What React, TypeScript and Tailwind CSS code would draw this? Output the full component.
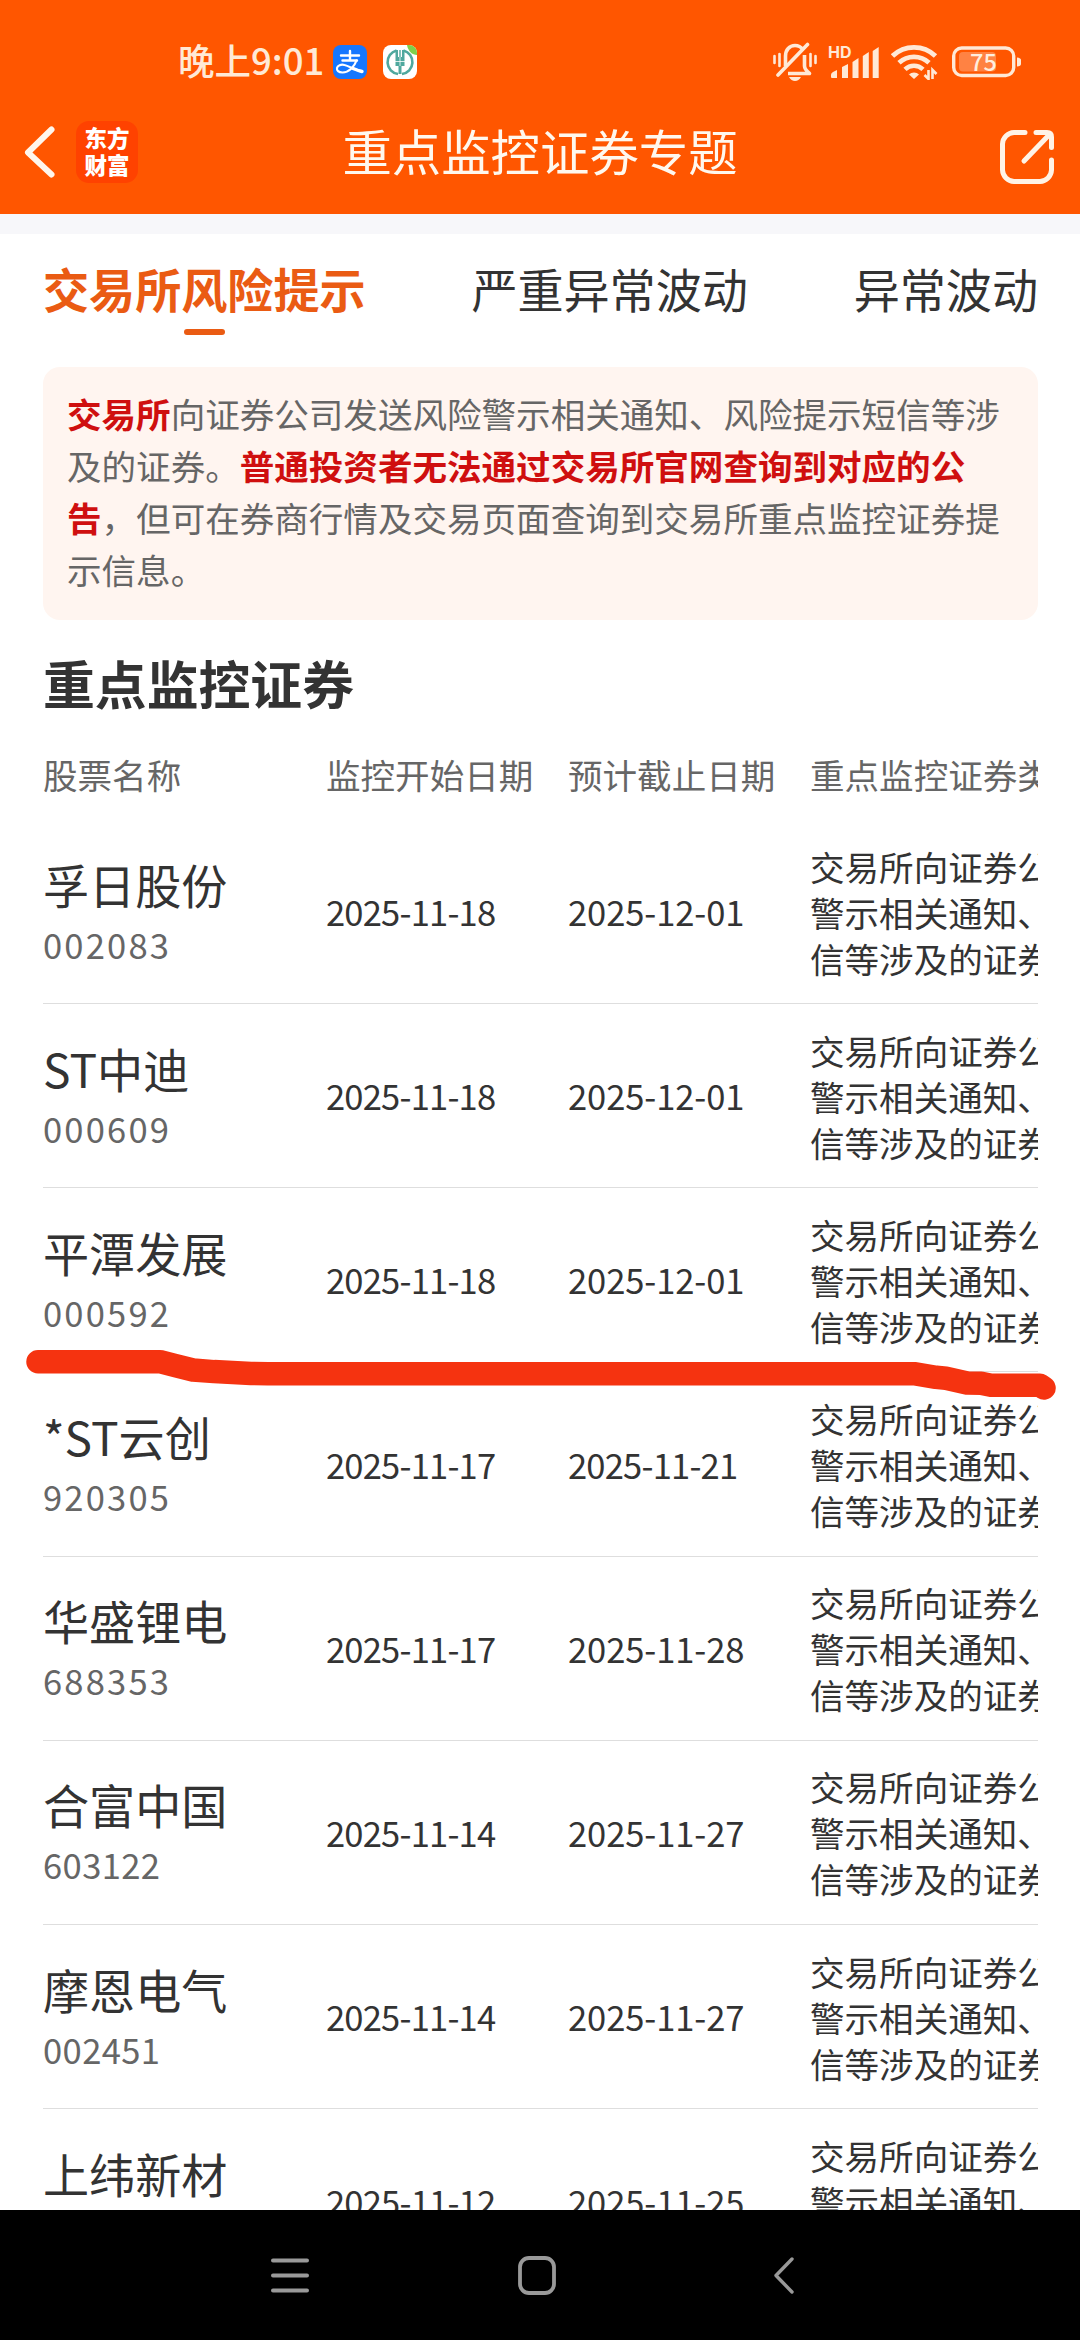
import React from 'react';
import clsx from 'clsx';

interface Stock {
  name: string;
  code: string;
  start: string;
  end: string;
}

const STOCKS: Stock[] = [
  { name: '孚日股份', code: '002083', start: '2025-11-18', end: '2025-12-01' },
  { name: 'ST中迪', code: '000609', start: '2025-11-18', end: '2025-12-01' },
  { name: '平潭发展', code: '000592', start: '2025-11-18', end: '2025-12-01' },
  { name: '*ST云创', code: '920305', start: '2025-11-17', end: '2025-11-21' },
  { name: '华盛锂电', code: '688353', start: '2025-11-17', end: '2025-11-28' },
  { name: '合富中国', code: '603122', start: '2025-11-14', end: '2025-11-27' },
  { name: '摩恩电气', code: '002451', start: '2025-11-14', end: '2025-11-27' },
  { name: '上纬新材', code: '688585', start: '2025-11-12', end: '2025-11-25' },
];

const COLUMNS = ['股票名称', '监控开始日期', '预计截止日期', '重点监控证券类型'];

const GRID = 'grid grid-cols-[283px_242px_242px_480px] w-[1247px]';

// Number of "1" digits, they are set tighter than the others
const countOnes = (value: string): number => value.split('1').length - 1;

function AlipayIcon(): React.JSX.Element {
  return (
    <svg width="34" height="34" viewBox="0 0 34 34" fill="none">
      <rect width="34" height="34" rx="8" fill="#1677ff" />
      <g stroke="#fff" strokeWidth="2.4" strokeLinecap="round">
        <path d="M8 10.500h18M17 6v9M9.500 15.500H24" />
        <path d="M23.500 15.500c-2 6-7.500 12-14 12-4 0-6-2-5.500-4.500.5-2.500 4-4 7.500-3 5 1.300 10 4.700 17.500 6.200" strokeWidth="2.200" />
        <path d="M20 23.500c3 1.200 6 2.400 9 3" strokeWidth="3.400" />
      </g>
    </svg>
  );
}

function BankIcon(): React.JSX.Element {
  return (
    <svg width="34" height="34" viewBox="0 0 34 34" fill="none">
      <rect width="34" height="34" rx="8" fill="#fff" />
      <path d="M24 0h2a8 8 0 0 1 8 8v2c-5 0-9-4-10-10z" fill="#7ed04b" />
      <g stroke="#4fa89e" fill="none">
        <path d="M13.500 5.500a12 12 0 0 0 1.500 23.500M20.500 5.500A12 12 0 0 1 19 29" strokeWidth="2.600" />
        <path d="M17 20v9" strokeWidth="3" />
      </g>
      <path d="M12.500 12V5h2.500v7h1.300V5h1.400v7H19V5h2.500v16h-9z" fill="#4fa89e" />
      <path d="M12 16.500h10M17 12v9" stroke="#fff" strokeWidth=".8" />
    </svg>
  );
}

function MutedBellIcon(): React.JSX.Element {
  return (
    <svg width="44" height="40" viewBox="0 0 44 40" fill="none" stroke="#ffe9d6">
      <path d="M1.500 14v7M6.500 12v12M37.500 12v12M42.500 14v7" strokeWidth="2.600" strokeLinecap="round" />
      <path d="M12.500 24V14c0-6 4-10.500 9.500-10.500 3.500 0 6 1.500 7.800 4" strokeWidth="3.600" />
      <path d="M31.500 13v11c0 3 2 5 5 7.500H15" strokeWidth="3.600" strokeLinejoin="round" />
      <path d="M5 33 34.500 2.500" strokeWidth="3.600" strokeLinecap="round" />
      <path d="M16 35h12c-1.500 2.500-3.500 4-6 4s-4.500-1.500-6-4z" fill="#ffe9d6" stroke="none" />
    </svg>
  );
}

function SignalIcon(): React.JSX.Element {
  return (
    <svg className="overflow-visible" width="50" height="34" viewBox="0 0 50 34" fill="#ffe9d6">
      <path d="M2 30q0-2 2-3l4-2v8H3q-1 0-1-1zM13 22l6-3v14h-6zM23.500 17l6-4v20h-6zM33.800 11l6-4v26h-6zM43.700 6l6-4v31h-6z" />
      <text x="-1" y="12.500" fontSize="16" fontWeight="700" fontFamily="Inter, sans-serif">
        HD
      </text>
    </svg>
  );
}

function WifiIcon(): React.JSX.Element {
  return (
    <svg width="47" height="36" viewBox="0 0 47 36" fill="none" stroke="#ffe9d6">
      <path d="M1.500 12a31 31 0 0 1 43 0" strokeWidth="4.800" />
      <path d="M8 18.700a22 22 0 0 1 30 0" strokeWidth="4.800" />
      <path d="M14 25.300a13 13 0 0 1 18 0" strokeWidth="4.600" />
      <path d="M18 30.500a7 7 0 0 1 10 0l-5 4.500z" fill="#ffe9d6" stroke="none" />
      <path d="M37.500 26v9l-4-4M41.500 35v-9l4 4" strokeWidth="2.600" />
    </svg>
  );
}

function BatteryIcon(): React.JSX.Element {
  return (
    <svg className="overflow-visible" width="70" height="32" viewBox="0 0 70 32" fill="none">
      <rect x="1.700" y="2" width="60" height="27.500" rx="8" stroke="#ffe9d6" strokeWidth="3.400" />
      <rect x="7" y="6" width="37" height="19.500" rx="4" fill="#ff8243" />
      <path d="M65 11.500q4 .5 4 2.500v4q0 2-4 2.500z" fill="#ffe9d6" />
      <text x="31.500" y="24.500" textAnchor="middle" fontSize="23.500" fontWeight="500" fill="#ffeede" fontFamily="'Noto Sans CJK SC', sans-serif">
        75
      </text>
    </svg>
  );
}

function ShareIcon(): React.JSX.Element {
  return (
    <svg width="56" height="56" viewBox="0 0 56 56" fill="none" stroke="#fff3e6" strokeWidth="5" strokeLinecap="round" strokeLinejoin="round">
      <path d="M26 3.500H15A12 12 0 0 0 3.500 15v26A12 12 0 0 0 15 52.500h26A12 12 0 0 0 52.500 41V31" />
      <path d="M37 3.500h11q4.500 0 4.500 4.500v10.500M49 7 25 32" />
    </svg>
  );
}

function StatusBar(): React.JSX.Element {
  return (
    <div className="h-[121px] pt-[3px] flex items-center justify-between pl-[178px] pr-[58px]">
      <div className="flex items-center">
        <span className="-mt-1 text-[36.500px] leading-none w-[155px] font-medium text-[#ffe9d6]">晚上9:01</span>
        <AlipayIcon />
        <span className="w-4" />
        <BankIcon />
      </div>
      <div className="flex items-center">
        <MutedBellIcon />
        <span className="ml-3 mr-3">
          <SignalIcon />
        </span>
        <WifiIcon />
        <span className="ml-3.5">
          <BatteryIcon />
        </span>
      </div>
    </div>
  );
}

function TitleBar(): React.JSX.Element {
  return (
    <div className="h-[62px] grid grid-cols-[1fr_auto_1fr] items-center pl-[23px] pr-[25px]">
      <div className="flex items-center">
        <svg width="33" height="54" viewBox="0 0 33 54" fill="none" stroke="#fff6ec" strokeWidth="6" strokeLinecap="round" strokeLinejoin="round">
          <path d="M28.500 4.500 5 27.500l23.500 22" />
        </svg>
        <div className="ml-5 w-[62px] h-[62px] pb-0.5 rounded-[13px] bg-[#ff4200] text-white text-[22.500px] leading-[27.500px] font-black flex flex-col items-center justify-center">
          <span>东方</span>
          <span>财富</span>
        </div>
      </div>
      <h1 className="-mt-1 ml-0.5 text-[49.400px] leading-none text-[#fff8ee]">重点监控证券专题</h1>
      <div className="mt-2 -mb-0.5 flex justify-end">
        <ShareIcon />
      </div>
    </div>
  );
}

function StockRow({ stock }: { stock: Stock }): React.JSX.Element {
  const dateTracking = (date: string): string =>
    countOnes(date) > 2 ? 'tracking-[-0.800px]' : 'tracking-[-0.100px]';

  return (
    <div className={clsx(GRID, 'h-[184.170px] items-center')}>
      <div className="flex flex-col">
        <span className="-mt-px mb-px text-[46.080px] leading-[64px]">{stock.name}</span>
        <span
          className={clsx(
            'text-[34.560px] leading-[54px] text-[#666]',
            countOnes(stock.code) > 0 ? 'tracking-[0.400px]' : 'tracking-[2.200px]',
          )}
        >
          {stock.code}
        </span>
      </div>
      <span className={clsx('pt-px text-[34.560px]', dateTracking(stock.start))}>{stock.start}</span>
      <span className={clsx('pt-px text-[34.560px]', dateTracking(stock.end))}>{stock.end}</span>
      <p className="text-[34.560px] leading-[46px]">
        交易所向证券公司发送风险
        <br />
        警示相关通知、风险提示短
        <br />
        信等涉及的证券
      </p>
    </div>
  );
}

export default function App(): React.JSX.Element {
  return (
    <div className="relative w-[1080px] h-[2340px] overflow-hidden flex flex-col bg-white text-[#333] font-['Noto_Sans_CJK_SC',sans-serif]">
      <header className="h-[214px] shrink-0 bg-[#ff5600]">
        <StatusBar />
        <TitleBar />
      </header>
      <div className="h-5 shrink-0 bg-[#f7f7fa]" />

      <main className="flex-1 min-h-0 overflow-hidden pl-[43px] pr-[42px]">
        {/* Tabs */}
        <nav className="h-[133px] pt-[19px] flex justify-between items-start text-[46.080px] leading-[70px]">
          <div className="flex flex-col items-center font-bold text-[#ea5b13]">
            交易所风险提示
            <span className="mt-1.5 w-[41px] h-1.5 rounded-full bg-[#ea5b13]" />
          </div>
          <div>严重异常波动</div>
          <div>异常波动</div>
        </nav>

        {/* Notice */}
        <div className="h-[253px] rounded-[17px] bg-[#fff5f0] pl-6 pt-[21px] text-[34.560px] leading-[51.840px] text-[#666] whitespace-nowrap">
          <b className="text-[#cf0f0f]">交易所</b>向证券公司发送风险警示相关通知、风险提示短信等涉
          <br />
          及的证券。<b className="text-[#cf0f0f]">普通投资者无法通过交易所官网查询到对应的公</b>
          <br />
          <b className="text-[#cf0f0f]">告</b>，但可在券商行情及交易页面查询到交易所重点监控证券提
          <br />
          示信息。
        </div>

        <h2 className="mt-[27px] text-[51.840px] leading-[72px] font-bold">重点监控证券</h2>

        {/* Table scrolls sideways, the last column is cut off */}
        <div className="overflow-hidden">
          <div className={clsx(GRID, 'h-[101px] pt-[29px] text-[34.560px] leading-[52px] text-[#666] whitespace-nowrap')}>
            {COLUMNS.map((label) => (
              <span key={label}>{label}</span>
            ))}
          </div>
          <div className="divide-y divide-[#dedede]">
            {STOCKS.map((stock) => (
              <StockRow key={stock.code} stock={stock} />
            ))}
          </div>
        </div>
      </main>

      {/* System navigation */}
      <footer className="h-[130px] shrink-0 bg-black pl-[270px] flex items-center">
        <svg width="40" height="40" viewBox="0 0 40 40" stroke="#999" strokeWidth="4" strokeLinecap="round">
          <path d="M3 5.500h34M3 20.500h34M3 35.500h34" />
        </svg>
        <svg className="ml-[207px]" width="40" height="40" viewBox="0 0 40 40" fill="none" stroke="#999" strokeWidth="3.800">
          <rect x="3" y="3" width="34" height="35" rx="9" />
        </svg>
        <svg className="ml-[215px]" width="24" height="40" viewBox="0 0 24 40" fill="none" stroke="#999" strokeWidth="3.400" strokeLinecap="round" strokeLinejoin="round">
          <path d="M20 4 4 20.500 20 37" />
        </svg>
      </footer>

      {/* Hand-drawn marker under 平潭发展 */}
      <svg className="absolute left-0 top-[1340px]" width="1080" height="70" viewBox="0 0 1080 70" fill="none" stroke="#f53310" strokeWidth="23.500" strokeLinecap="round" strokeLinejoin="round">
        <path d="M38 21.700H160Q176 26 193 30L214 31.600 251 33.400 268 33.700H914L936 37.300 946 38.300 967 43 981 43.200 991 45.300H1040L1044 48" />
      </svg>
    </div>
  );
}
